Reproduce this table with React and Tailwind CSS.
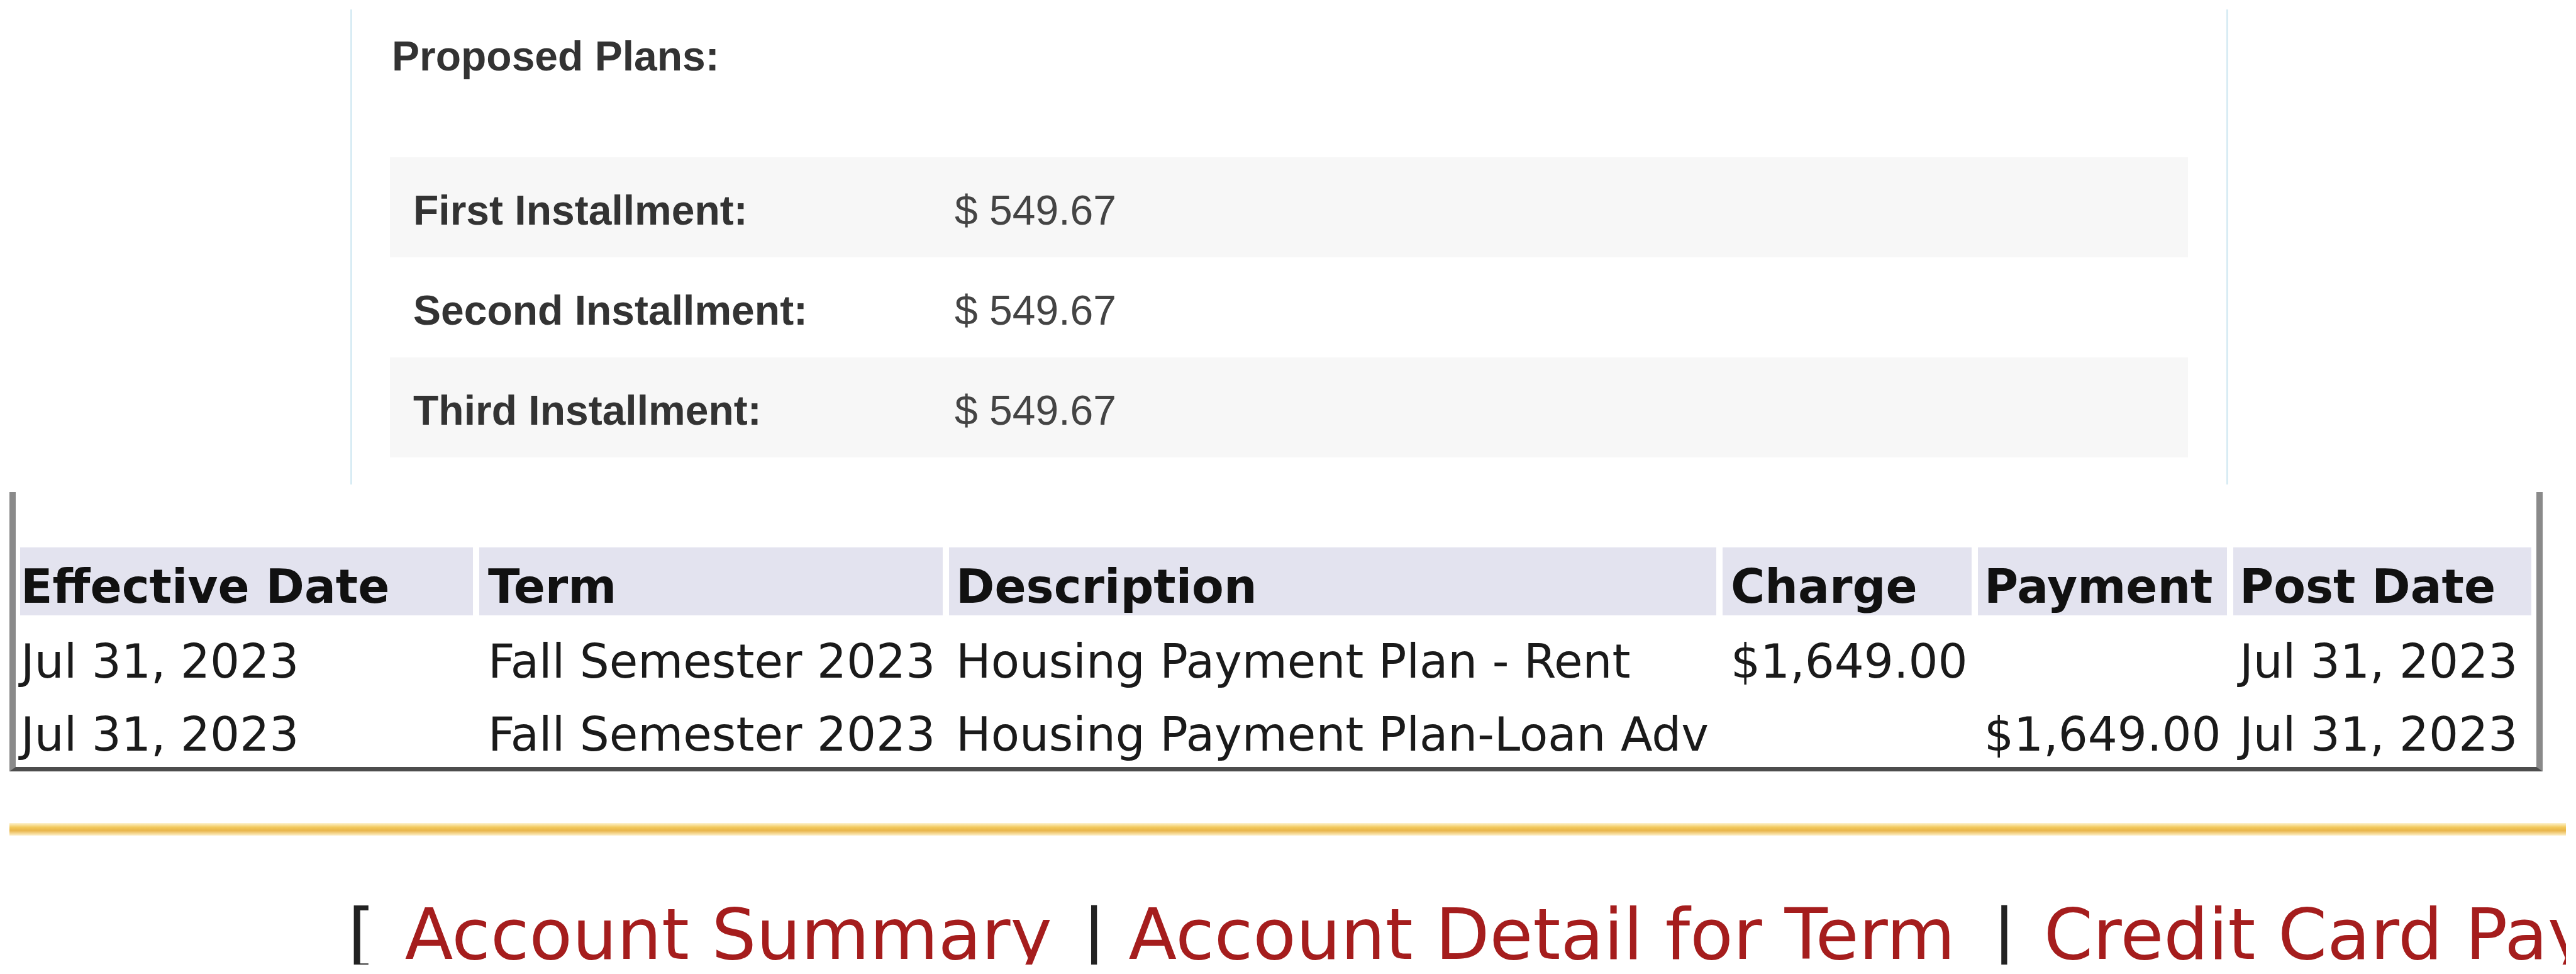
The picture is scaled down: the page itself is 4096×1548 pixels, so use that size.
const plans = [
  { label: "First Installment:", amount: "$ 549.67", shaded: true },
  { label: "Second Installment:", amount: "$ 549.67", shaded: false },
  { label: "Third Installment:", amount: "$ 549.67", shaded: true },
];

const columns = [
  { title: "Effective Date", pad: "pl-[1px]" },
  { title: "Term", pad: "pl-[14px]" },
  { title: "Description", pad: "pl-[11px]" },
  { title: "Charge", pad: "pl-[13px]" },
  { title: "Payment", pad: "pl-[10px]" },
  { title: "Post Date", pad: "pl-[10px]" },
];

const rows = [
  ["Jul 31, 2023", "Fall Semester 2023", "Housing Payment Plan - Rent", "$1,649.00", "", "Jul 31, 2023"],
  ["Jul 31, 2023", "Fall Semester 2023", "Housing Payment Plan-Loan Adv", "", "$1,649.00", "Jul 31, 2023"],
];

const ProposedPlans = () => {
  return (
    <section className="ml-[557px] mt-[15px] h-[755px] w-[2986px] border-x-[3px] border-[#d8ecf4] pl-[60px] pt-[37px] font-['Liberation_Sans',Arial,sans-serif]">
      <h3 className="ml-[3px] text-[66px] leading-[74px] font-bold text-[#333]">
        Proposed Plans:
      </h3>
      <div className="mt-[124px] w-[2859px]">
        {plans.map((plan) => (
          <div
            key={plan.label}
            className={`flex h-[159px] pl-[37px] pt-[47px] text-[66px] leading-[74px] ${
              plan.shaded ? "bg-[#f7f7f7]" : "bg-white"
            }`}
          >
            <span className="w-[861px] font-bold text-[#333]">{plan.label}</span>
            <span className="text-[#444]">{plan.amount}</span>
          </div>
        ))}
      </div>
    </section>
  );
};

const AccountTable = () => {
  return (
    <section className="ml-[15px] mt-[12px] w-[4028px] border-x-[10px] border-b-[7px] border-x-[#8a8a8a] border-b-[#4d4d4d] pl-[7px] pr-[8px] pt-[88px] pb-[9px] font-['DejaVu_Sans',Verdana,sans-serif] text-[74px] leading-[86px]">
      <div className="grid grid-cols-[720px_737px_1220px_396px_396px_474px] gap-x-[10px]">
        {columns.map((col) => (
          <div
            key={col.title}
            className={`h-[108px] bg-[#e3e3ef] pt-[19px] font-bold text-[#111] whitespace-nowrap ${col.pad}`}
          >
            {col.title}
          </div>
        ))}
        {rows.map((row, i) =>
          row.map((cell, j) => (
            <div
              key={`${i}-${j}`}
              className={`h-[116px] pt-[30px] text-[#1a1a1a] whitespace-nowrap ${columns[j].pad}`}
            >
              {cell}
            </div>
          ))
        )}
      </div>
    </section>
  );
};

const AccountNav = () => {
  return (
    <nav className="mt-[93px] flex h-[112px] w-[4080px] items-baseline overflow-hidden whitespace-nowrap font-['DejaVu_Sans',Verdana,sans-serif] text-[112px] leading-[128px]">
      <span className="ml-[553px] text-[#222]">[</span>
      <a href="#" className="ml-[47px] text-[#a51d1d]">
        Account Summary
      </a>
      <span className="ml-[48px] text-[#222]">|</span>
      <a href="#" className="ml-[36px] text-[#a51d1d]">
        Account Detail for Term
      </a>
      <span className="ml-[59px] text-[#222]">|</span>
      <a href="#" className="ml-[44px] text-[#a51d1d]">
        Credit Card Payment
      </a>
    </nav>
  );
};

export default function App() {
  return (
    <div className="h-[1548px] w-[4096px] overflow-hidden bg-white">
      <ProposedPlans />
      <AccountTable />
      <div className="ml-[15px] mt-[82px] h-[20px] w-[4065px] bg-[linear-gradient(to_bottom,#fdf3d0,#f2c85a_35%,#e9b54a_60%,#fdf0c8)]" />
      <AccountNav />
    </div>
  );
}
